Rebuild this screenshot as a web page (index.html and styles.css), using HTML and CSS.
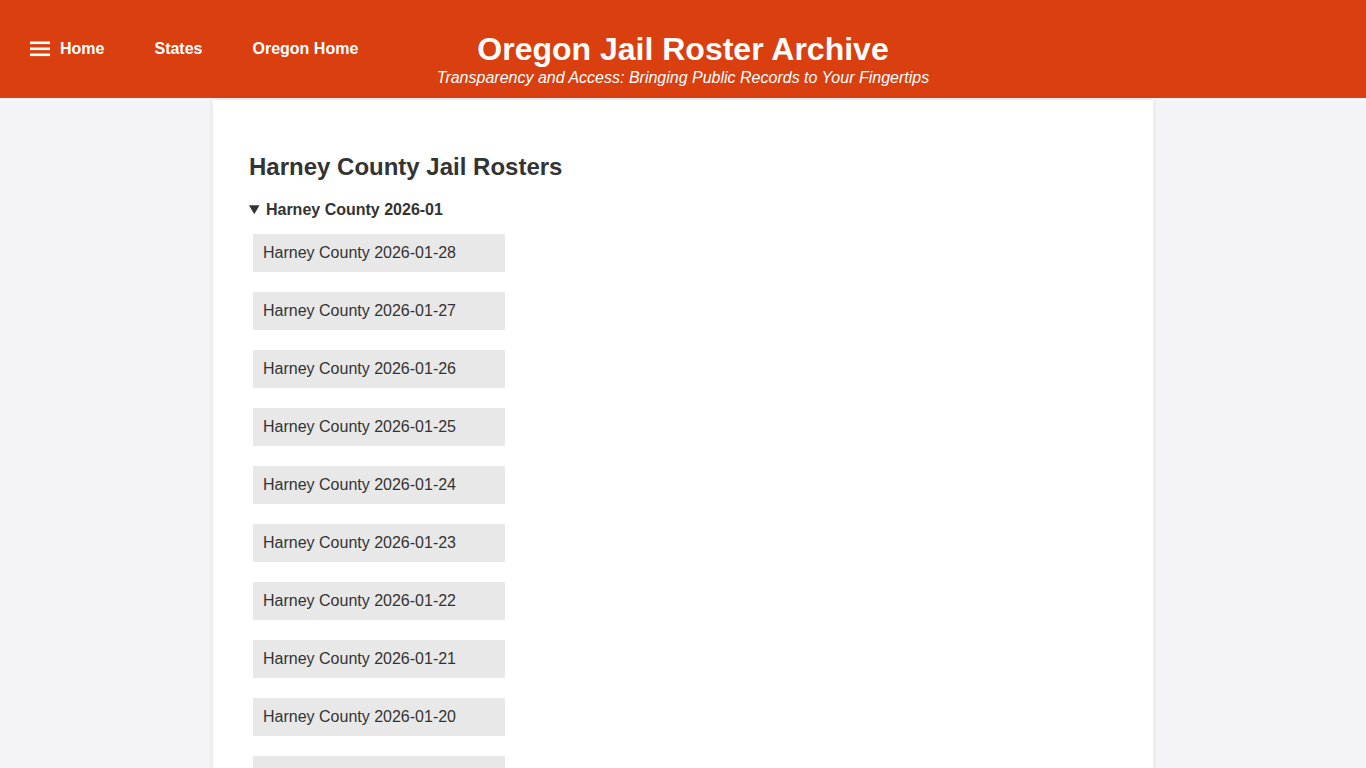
FILE: index.html
```html
<!DOCTYPE html>
<html lang="en">
<head>
<meta charset="utf-8">
<title>Harney County Jail Rosters - Oregon Jail Roster Archive</title>
<link rel="stylesheet" href="styles.css">
</head>
<body>
<header class="site-header">
  <nav class="nav">
    <a class="nav-link" href="#"><svg class="burger" width="20" height="16" viewBox="0 0 20 16"><rect x="0" y="0.5" width="20" height="2.6" fill="#fff"/><rect x="0" y="6.5" width="20" height="2.6" fill="#fff"/><rect x="0" y="12.5" width="20" height="2.6" fill="#fff"/></svg>Home</a>
    <a class="nav-link" href="#">States</a>
    <a class="nav-link" href="#">Oregon Home</a>
  </nav>
  <div class="brand">
    <div class="brand-title">Oregon Jail Roster Archive</div>
    <div class="brand-sub">Transparency and Access: Bringing Public Records to Your Fingertips</div>
  </div>
  <div class="spacer"></div>
</header>
<main class="container">
  <h2 class="page-title">Harney County Jail Rosters</h2>
  <details class="month" open>
    <summary class="month-title">Harney County 2026-01</summary>
    <ul class="roster-list">
      <li><a class="roster" href="#">Harney County 2026-01-28</a></li>
      <li><a class="roster" href="#">Harney County 2026-01-27</a></li>
      <li><a class="roster" href="#">Harney County 2026-01-26</a></li>
      <li><a class="roster" href="#">Harney County 2026-01-25</a></li>
      <li><a class="roster" href="#">Harney County 2026-01-24</a></li>
      <li><a class="roster" href="#">Harney County 2026-01-23</a></li>
      <li><a class="roster" href="#">Harney County 2026-01-22</a></li>
      <li><a class="roster" href="#">Harney County 2026-01-21</a></li>
      <li><a class="roster" href="#">Harney County 2026-01-20</a></li>
      <li><a class="roster" href="#">Harney County 2026-01-19</a></li>
      <li><a class="roster" href="#">Harney County 2026-01-18</a></li>
      <li><a class="roster" href="#">Harney County 2026-01-17</a></li>
    </ul>
  </details>
</main>
</body>
</html>
```
FILE: styles.css
```css
html, body {
  margin: 0;
  padding: 0;
}
body {
  background: #f3f3f8;
  font-family: "Liberation Sans", Arial, sans-serif;
  color: #333;
}
.site-header {
  background: #d93f0f;
  height: 98px;
  display: grid;
  grid-template-columns: 1fr auto 1fr;
  align-items: center;
  color: #fff;
}
.nav {
  display: flex;
  align-items: center;
  padding-left: 30px;
}
.nav-link {
  font-family: "Liberation Sans", Arial, sans-serif;
  font-weight: bold;
  font-size: 16px;
  color: #fff;
  text-decoration: none;
  display: flex;
  align-items: center;
  margin-right: 50px;
  white-space: nowrap;
}
.burger {
  margin-right: 10px;
}
.brand {
  align-self: start;
  text-align: center;
  padding-top: 32px;
}
.brand-title {
  font-size: 32px;
  font-weight: bold;
  line-height: 34px;
}
.brand-sub {
  font-size: 16px;
  font-style: italic;
  line-height: 20px;
  margin-top: 2px;
}
.container {
  width: 940px;
  margin: 2px auto 0;
  background: #fff;
  box-sizing: border-box;
  padding: 53px 36px 40px;
  box-shadow: 0 0 6px rgba(0, 0, 0, 0.08);
  min-height: 700px;
}
.page-title {
  font-size: 24px;
  font-weight: bold;
  margin: 0 0 20px;
}
.month-title {
  font-size: 16px;
  font-weight: bold;
  cursor: pointer;
}
.roster-list {
  list-style: none;
  margin: 15px 0 0;
  padding: 0 0 0 4px;
}
.roster-list li {
  margin-bottom: 20px;
}
.roster {
  display: block;
  width: 252px;
  box-sizing: border-box;
  padding: 10px;
  background: #e8e8e8;
  color: #333;
  text-decoration: none;
  font-size: 16px;
}
```
